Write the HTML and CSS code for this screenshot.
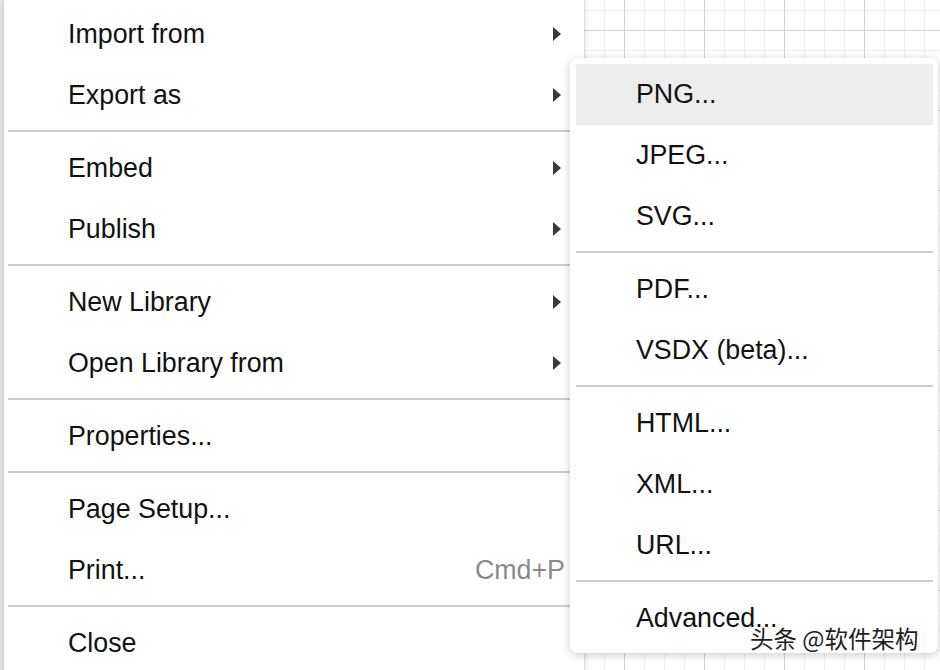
FILE: index.html
```html
<!DOCTYPE html>
<html>
<head>
<meta charset="utf-8">
<link rel="stylesheet" href="styles.css">
</head>
<body>
<div class="stage">
  <div class="edge"></div>
  <div class="menu main">
    <div class="item"><span>Import from</span><svg class="arrow" viewBox="0 0 8 14"><polygon points="0,0 8,7 0,14"/></svg></div>
    <div class="item"><span>Export as</span><svg class="arrow" viewBox="0 0 8 14"><polygon points="0,0 8,7 0,14"/></svg></div>
    <div class="sep"></div>
    <div class="item"><span>Embed</span><svg class="arrow" viewBox="0 0 8 14"><polygon points="0,0 8,7 0,14"/></svg></div>
    <div class="item"><span>Publish</span><svg class="arrow" viewBox="0 0 8 14"><polygon points="0,0 8,7 0,14"/></svg></div>
    <div class="sep"></div>
    <div class="item"><span>New Library</span><svg class="arrow" viewBox="0 0 8 14"><polygon points="0,0 8,7 0,14"/></svg></div>
    <div class="item"><span>Open Library from</span><svg class="arrow" viewBox="0 0 8 14"><polygon points="0,0 8,7 0,14"/></svg></div>
    <div class="sep"></div>
    <div class="item"><span>Properties...</span></div>
    <div class="sep"></div>
    <div class="item"><span>Page Setup...</span></div>
    <div class="item"><span>Print...</span><span class="shortcut">Cmd+P</span></div>
    <div class="sep"></div>
    <div class="item"><span>Close</span></div>
  </div>
  <div class="menu sub">
    <div class="item active"><span>PNG...</span></div>
    <div class="item"><span>JPEG...</span></div>
    <div class="item"><span>SVG...</span></div>
    <div class="sep"></div>
    <div class="item"><span>PDF...</span></div>
    <div class="item"><span>VSDX (beta)...</span></div>
    <div class="sep"></div>
    <div class="item"><span>HTML...</span></div>
    <div class="item"><span>XML...</span></div>
    <div class="item"><span>URL...</span></div>
    <div class="sep"></div>
    <div class="item"><span>Advanced...</span></div>
  </div>
  <div class="watermark">头条 @软件架构</div>
</div>
</body>
</html>
```
FILE: styles.css
```css
html, body {
  margin: 0;
  padding: 0;
}
.stage {
  position: relative;
  width: 940px;
  height: 670px;
  overflow: hidden;
  background-color: #ffffff;
  background-image:
    linear-gradient(to right, #d2d2d2 1px, transparent 1px),
    linear-gradient(to bottom, #d2d2d2 1px, transparent 1px),
    linear-gradient(to right, #efefef 1px, transparent 1px),
    linear-gradient(to bottom, #efefef 1px, transparent 1px);
  background-size: 80px 80px, 80px 80px, 20px 20px, 20px 20px;
  background-position: 64px 30px, 64px 30px, 4px 10px, 4px 10px;
  font-family: "Liberation Sans", Arial, Helvetica, sans-serif;
  font-size: 26.8px;
  color: #111;
}
.edge {
  position: absolute;
  left: 0;
  top: 0;
  width: 4px;
  height: 670px;
  background: #e6e6e6;
}
.menu {
  position: absolute;
  background: #fff;
  box-sizing: border-box;
}
.main {
  left: 4px;
  top: 0;
  width: 580px;
  padding: 3.5px 4px 0 4px;
  box-shadow: 0 0 6px rgba(0, 0, 0, 0.18);
}
.sub {
  left: 570px;
  top: 58px;
  width: 368px;
  padding: 6px 5px 4px 6px;
  border-radius: 8px;
  box-shadow: 0 2px 10px rgba(0, 0, 0, 0.2);
}
.item {
  display: flex;
  align-items: center;
  justify-content: space-between;
  height: 61px;
  padding: 0 15px 0 60px;
  white-space: nowrap;
}
.active {
  background: #ededed;
}
.sep {
  height: 2px;
  margin: 4px 0 6px 0;
  background: #cdcdcd;
}
.arrow {
  width: 8px;
  height: 14px;
  margin-right: 4px;
  fill: #3a3a3a;
}
.shortcut {
  color: #8a8a8a;
}
.watermark {
  position: absolute;
  left: 750px;
  top: 622px;
  font-family: "Noto Sans CJK SC", sans-serif;
  font-size: 23.5px;
  line-height: 32px;
  color: #1e1e1e;
  text-shadow: 0 0 2px #fff, 0 0 2px #fff, 1px 1px 0 #fff, -1px -1px 0 #fff;
}
```
